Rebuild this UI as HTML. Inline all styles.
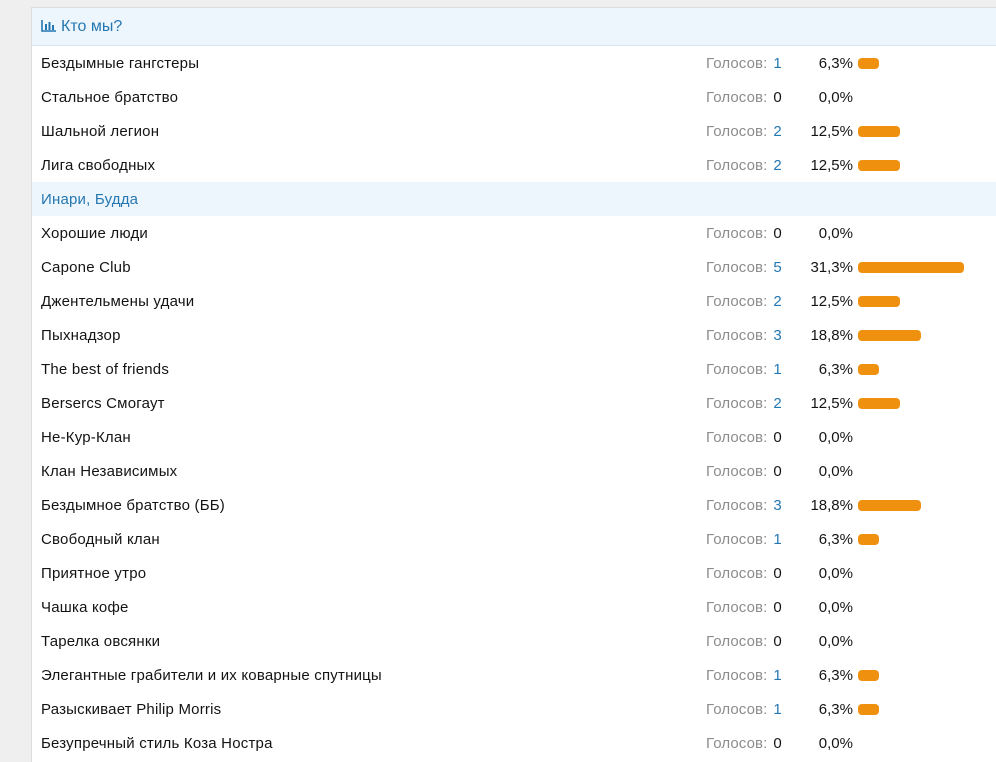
<!DOCTYPE html>
<html><head><meta charset="utf-8"><style>
html,body{margin:0;height:762px;overflow:hidden}
body{background:#efefef;font-family:"Liberation Sans",sans-serif;font-size:15px;color:#141414;width:996px;position:relative}
.panel{position:absolute;left:31px;top:7px;width:980px;height:760px;background:#fff;border:1px solid #dcdcdc}
.hdr{height:37px;background:#edf6fd;border-bottom:1px solid #d8e4ef;color:#2577b1;font-size:16px;line-height:37px;padding-left:9px}
.row{height:34px;position:relative;line-height:36px}
.row .n{position:absolute;left:9px;letter-spacing:0.2px}
.row .g{position:absolute;left:674px;color:#8c8c8c;letter-spacing:0.1px}
.row .g b{font-weight:normal;color:#141414;margin-left:6px}
.row .g i{font-style:normal;color:#2577b1;margin-left:6px}
.row .p{position:absolute;left:760px;width:61px;text-align:right}
.row .bar{position:absolute;left:826px;top:12px;height:11px;background:#f0900f;border-radius:4px}
.sub{background:#edf6fd;color:#2577b1}
</style></head><body>
<div class="panel">
<div class="hdr"><svg width="16" height="13" viewBox="0 0 16 13" style="vertical-align:-1px;margin-right:4px"><path d="M1 1v11h14" stroke="#2577b1" stroke-width="1.6" fill="none"/><rect x="4" y="5" width="2" height="6" fill="#2577b1"/><rect x="7.5" y="3" width="2" height="8" fill="#2577b1"/><rect x="11" y="6" width="2" height="5" fill="#2577b1"/></svg>Кто мы?</div>
<div class="row"><span class="n">Бездымные гангстеры</span><span class="g">Голосов:<i>1</i></span><span class="p">6,3%</span><span class="bar" style="width:21px"></span></div>
<div class="row"><span class="n">Стальное братство</span><span class="g">Голосов:<b>0</b></span><span class="p">0,0%</span></div>
<div class="row"><span class="n">Шальной легион</span><span class="g">Голосов:<i>2</i></span><span class="p">12,5%</span><span class="bar" style="width:42px"></span></div>
<div class="row"><span class="n">Лига свободных</span><span class="g">Голосов:<i>2</i></span><span class="p">12,5%</span><span class="bar" style="width:42px"></span></div>
<div class="row sub"><span class="n">Инари, Будда</span></div>
<div class="row"><span class="n">Хорошие люди</span><span class="g">Голосов:<b>0</b></span><span class="p">0,0%</span></div>
<div class="row"><span class="n">Capone Club</span><span class="g">Голосов:<i>5</i></span><span class="p">31,3%</span><span class="bar" style="width:106px"></span></div>
<div class="row"><span class="n">Джентельмены удачи</span><span class="g">Голосов:<i>2</i></span><span class="p">12,5%</span><span class="bar" style="width:42px"></span></div>
<div class="row"><span class="n">Пыхнадзор</span><span class="g">Голосов:<i>3</i></span><span class="p">18,8%</span><span class="bar" style="width:63px"></span></div>
<div class="row"><span class="n">The best of friends</span><span class="g">Голосов:<i>1</i></span><span class="p">6,3%</span><span class="bar" style="width:21px"></span></div>
<div class="row"><span class="n">Bersercs Смогаут</span><span class="g">Голосов:<i>2</i></span><span class="p">12,5%</span><span class="bar" style="width:42px"></span></div>
<div class="row"><span class="n">Не-Кур-Клан</span><span class="g">Голосов:<b>0</b></span><span class="p">0,0%</span></div>
<div class="row"><span class="n">Клан Независимых</span><span class="g">Голосов:<b>0</b></span><span class="p">0,0%</span></div>
<div class="row"><span class="n">Бездымное братство (ББ)</span><span class="g">Голосов:<i>3</i></span><span class="p">18,8%</span><span class="bar" style="width:63px"></span></div>
<div class="row"><span class="n">Свободный клан</span><span class="g">Голосов:<i>1</i></span><span class="p">6,3%</span><span class="bar" style="width:21px"></span></div>
<div class="row"><span class="n">Приятное утро</span><span class="g">Голосов:<b>0</b></span><span class="p">0,0%</span></div>
<div class="row"><span class="n">Чашка кофе</span><span class="g">Голосов:<b>0</b></span><span class="p">0,0%</span></div>
<div class="row"><span class="n">Тарелка овсянки</span><span class="g">Голосов:<b>0</b></span><span class="p">0,0%</span></div>
<div class="row"><span class="n">Элегантные грабители и их коварные спутницы</span><span class="g">Голосов:<i>1</i></span><span class="p">6,3%</span><span class="bar" style="width:21px"></span></div>
<div class="row"><span class="n">Разыскивает Philip Morris</span><span class="g">Голосов:<i>1</i></span><span class="p">6,3%</span><span class="bar" style="width:21px"></span></div>
<div class="row"><span class="n">Безупречный стиль Коза Ностра</span><span class="g">Голосов:<b>0</b></span><span class="p">0,0%</span></div>
</div>
</body></html>
